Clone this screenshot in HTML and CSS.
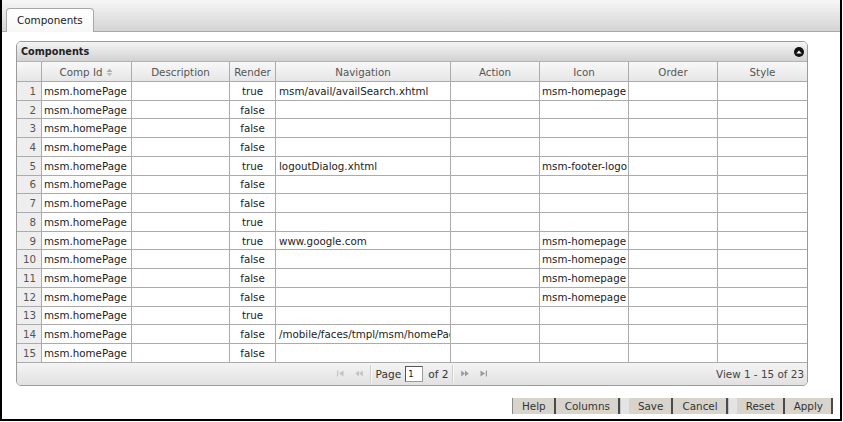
FILE: index.html
```html
<!DOCTYPE html>
<html>
<head>
<meta charset="utf-8">
<title>Components</title>
<link rel="stylesheet" href="styles.css">
</head>
<body>
<div class="page">
  <div class="tabbar">
    <div class="tab">Components</div>
  </div>
  <div class="content">
    <div class="panel">
      <div class="panel-head">
        <span class="panel-title">Components</span>
        <svg class="collapse" width="10" height="10" viewBox="0 0 10 10"><circle cx="5" cy="5" r="5" fill="#111"/><polygon points="2.3,6.6 7.7,6.6 5,3.4" fill="#fff"/></svg>
      </div>
      <table class="grid">
        <thead>
          <tr>
            <th class="c-num"></th>
            <th class="c-id">Comp Id<svg class="sort" width="7" height="9" viewBox="0 0 7 9"><polygon points="0.5,4 6.5,4 3.5,0.8" fill="#aaa"/><polygon points="0.5,5 6.5,5 3.5,8.2" fill="#bbb"/></svg></th>
            <th class="c-desc">Description</th>
            <th class="c-render">Render</th>
            <th class="c-nav">Navigation</th>
            <th class="c-act">Action</th>
            <th class="c-icon">Icon</th>
            <th class="c-order">Order</th>
            <th class="c-style">Style</th>
          </tr>
        </thead>
        <tbody>
          <tr><td class="num">1</td><td>msm.homePage</td><td></td><td class="ctr">true</td><td class="nav">msm/avail/availSearch.xhtml</td><td></td><td>msm-homepage</td><td></td><td></td></tr>
          <tr><td class="num">2</td><td>msm.homePage</td><td></td><td class="ctr">false</td><td class="nav"></td><td></td><td></td><td></td><td></td></tr>
          <tr><td class="num">3</td><td>msm.homePage</td><td></td><td class="ctr">false</td><td class="nav"></td><td></td><td></td><td></td><td></td></tr>
          <tr><td class="num">4</td><td>msm.homePage</td><td></td><td class="ctr">false</td><td class="nav"></td><td></td><td></td><td></td><td></td></tr>
          <tr><td class="num">5</td><td>msm.homePage</td><td></td><td class="ctr">true</td><td class="nav">logoutDialog.xhtml</td><td></td><td>msm-footer-logo</td><td></td><td></td></tr>
          <tr><td class="num">6</td><td>msm.homePage</td><td></td><td class="ctr">false</td><td class="nav"></td><td></td><td></td><td></td><td></td></tr>
          <tr><td class="num">7</td><td>msm.homePage</td><td></td><td class="ctr">false</td><td class="nav"></td><td></td><td></td><td></td><td></td></tr>
          <tr><td class="num">8</td><td>msm.homePage</td><td></td><td class="ctr">true</td><td class="nav"></td><td></td><td></td><td></td><td></td></tr>
          <tr><td class="num">9</td><td>msm.homePage</td><td></td><td class="ctr">true</td><td class="nav">www.google.com</td><td></td><td>msm-homepage</td><td></td><td></td></tr>
          <tr><td class="num">10</td><td>msm.homePage</td><td></td><td class="ctr">false</td><td class="nav"></td><td></td><td>msm-homepage</td><td></td><td></td></tr>
          <tr><td class="num">11</td><td>msm.homePage</td><td></td><td class="ctr">false</td><td class="nav"></td><td></td><td>msm-homepage</td><td></td><td></td></tr>
          <tr><td class="num">12</td><td>msm.homePage</td><td></td><td class="ctr">false</td><td class="nav"></td><td></td><td>msm-homepage</td><td></td><td></td></tr>
          <tr><td class="num">13</td><td>msm.homePage</td><td></td><td class="ctr">true</td><td class="nav"></td><td></td><td></td><td></td><td></td></tr>
          <tr><td class="num">14</td><td>msm.homePage</td><td></td><td class="ctr">false</td><td class="nav">/mobile/faces/tmpl/msm/homePage.xhtml</td><td></td><td></td><td></td><td></td></tr>
          <tr><td class="num">15</td><td>msm.homePage</td><td></td><td class="ctr">false</td><td class="nav"></td><td></td><td></td><td></td><td></td></tr>
        </tbody>
      </table>
      <div class="pager-bar">
        <div class="pager">
          <span class="pg-btn"><svg width="7" height="7" viewBox="0 0 7 7"><rect x="0" y="0.5" width="1.2" height="6" fill="#c4c4c4"/><polygon points="6.5,0.5 6.5,6.5 2,3.5" fill="#c4c4c4"/></svg></span>
          <span class="pg-btn"><svg width="8" height="7" viewBox="0 0 8 7"><polygon points="4,0.5 4,6.5 0.3,3.5" fill="#c4c4c4"/><polygon points="7.8,0.5 7.8,6.5 4.1,3.5" fill="#c4c4c4"/></svg></span>
          <span class="pg-sep"></span>
          <span class="pg-label">Page</span>
          <span class="pg-input">1</span>
          <span class="pg-label">of 2</span>
          <span class="pg-sep"></span>
          <span class="pg-btn"><svg width="8" height="7" viewBox="0 0 8 7"><polygon points="0.2,0.5 0.2,6.5 3.9,3.5" fill="#9a9a9a"/><polygon points="4,0.5 4,6.5 7.7,3.5" fill="#9a9a9a"/></svg></span>
          <span class="pg-btn"><svg width="7" height="7" viewBox="0 0 7 7"><polygon points="0.5,0.5 0.5,6.5 5,3.5" fill="#9a9a9a"/><rect x="5.8" y="0.5" width="1.2" height="6" fill="#9a9a9a"/></svg></span>
        </div>
        <div class="pg-info">View 1 - 15 of 23</div>
      </div>
    </div>
    <div class="actions">
      <span class="btn first">Help</span>
      <span class="btn">Columns</span>
      <span class="btn-gap"></span>
      <span class="btn">Save</span>
      <span class="btn">Cancel</span>
      <span class="btn-gap"></span>
      <span class="btn">Reset</span>
      <span class="btn">Apply</span>
    </div>
  </div>
</div>
</body>
</html>
```

FILE: styles.css
```css
html, body {
  margin: 0;
  padding: 0;
  background: #fff;
}

body {
  font-family: "DejaVu Sans", Verdana, sans-serif;
  font-size: 10.3px;
  color: #222;
}

.page {
  width: 842px;
  height: 421px;
  box-sizing: border-box;
  border: 2px solid #000;
  border-top: 0;
  display: flex;
  flex-direction: column;
}

/* Tab strip */
.tabbar {
  height: 31px;
  border-bottom: 1px solid #a8a8a8;
  background: linear-gradient(#f6f6f6, #d4d4d4);
  display: flex;
  align-items: flex-end;
  padding-left: 4px;
}

.tab {
  height: 24px;
  box-sizing: border-box;
  margin-bottom: -1px;
  padding: 0 10px;
  border: 1px solid #a8a8a8;
  border-bottom: 0;
  border-radius: 4px 4px 0 0;
  background: linear-gradient(#ffffff, #f7f7f7);
  line-height: 23px;
  font-size: 10.4px;
  color: #222;
}

/* Content */
.content {
  flex: 1;
  display: flex;
  flex-direction: column;
  padding: 9px 0 0 14px;
}

.panel {
  width: 792px;
  box-sizing: border-box;
  border: 1px solid #9a9a9a;
  border-radius: 5px;
  overflow: hidden;
}

.panel-head {
  height: 20px;
  box-sizing: border-box;
  border-bottom: 1px solid #b4b4b4;
  background: linear-gradient(#f4f4f4, #d2d2d2);
  display: flex;
  align-items: center;
  justify-content: space-between;
  padding: 0 3px 0 4px;
}

.panel-title {
  font-weight: bold;
  font-size: 9.7px;
  color: #222;
}

.collapse {
  display: block;
}

/* Grid */
.grid {
  width: 790px;
  table-layout: fixed;
  border-collapse: separate;
  border-spacing: 0;
}

.grid th,
.grid td {
  box-sizing: border-box;
  padding: 0 2px;
  border-right: 1px solid #ababab;
  border-bottom: 1px solid #ababab;
  white-space: nowrap;
  overflow: hidden;
  text-overflow: clip;
}

.grid th:last-child,
.grid td:last-child {
  border-right: 0;
}

.grid thead th {
  height: 20px;
  background: linear-gradient(#f8f8f8, #e6e6e6);
  font-weight: normal;
  color: #555;
  text-align: center;
}

.grid tbody td {
  height: 18.73px;
  color: #222;
}

.c-num { width: 25px; }
.c-id { width: 90px; }
.c-desc { width: 98px; }
.c-render { width: 46px; }
.c-nav { width: 175px; }
.c-act { width: 89px; }
.c-icon { width: 89px; }
.c-order { width: 89px; }
.c-style { width: 89px; }

.sort {
  margin-left: 4px;
  vertical-align: -1px;
}

.grid td.num {
  background: #eeeeee;
  color: #555;
  text-align: right;
  padding-right: 5px;
}

.grid td.ctr {
  text-align: center;
}

.grid td.nav {
  padding-left: 3px;
}

/* Pager */
.pager-bar {
  height: 22px;
  background: linear-gradient(#f4f4f4, #e1e1e1);
  display: grid;
  grid-template-columns: 1fr auto 1fr;
  align-items: center;
}

.pager {
  grid-column: 2;
  display: flex;
  align-items: center;
  color: #333;
}

.pg-btn {
  width: 18px;
  height: 16px;
  display: flex;
  align-items: center;
  justify-content: center;
}

.pg-sep {
  width: 1px;
  height: 18px;
  background: #cfcfcf;
  border-right: 1px solid #fafafa;
  margin: 0 2px 0 2px;
}

.pg-label {
  margin: 0 2px;
  font-size: 10.6px;
}

.pg-input {
  width: 18px;
  height: 16px;
  box-sizing: border-box;
  margin: 0 3px 0 2px;
  border: 1px solid #9a9a9a;
  border-top-color: #555;
  border-left-color: #555;
  background: #fff;
  font-size: 8.5px;
  line-height: 14px;
  padding-left: 2px;
  color: #111;
}

.pg-info {
  grid-column: 3;
  justify-self: end;
  padding-right: 3px;
  color: #444;
  font-size: 10.4px;
}

/* Buttons */
.actions {
  display: flex;
  justify-content: flex-end;
  margin-top: 12px;
  padding-right: 7px;
}

.btn {
  height: 16px;
  line-height: 16px;
  padding: 0 8px 0 9px;
  background: #d8d4cc;
  border-right: 2px solid #4a4a4a;
  color: #333;
  font-size: 10.4px;
}

.btn.first {
  border-left: 1px solid #8c8c8c;
}

.btn-gap {
  width: 8px;
  height: 16px;
  background: #e4e4e4;
  border-left: 1px solid #c4c4c4;
}
```
